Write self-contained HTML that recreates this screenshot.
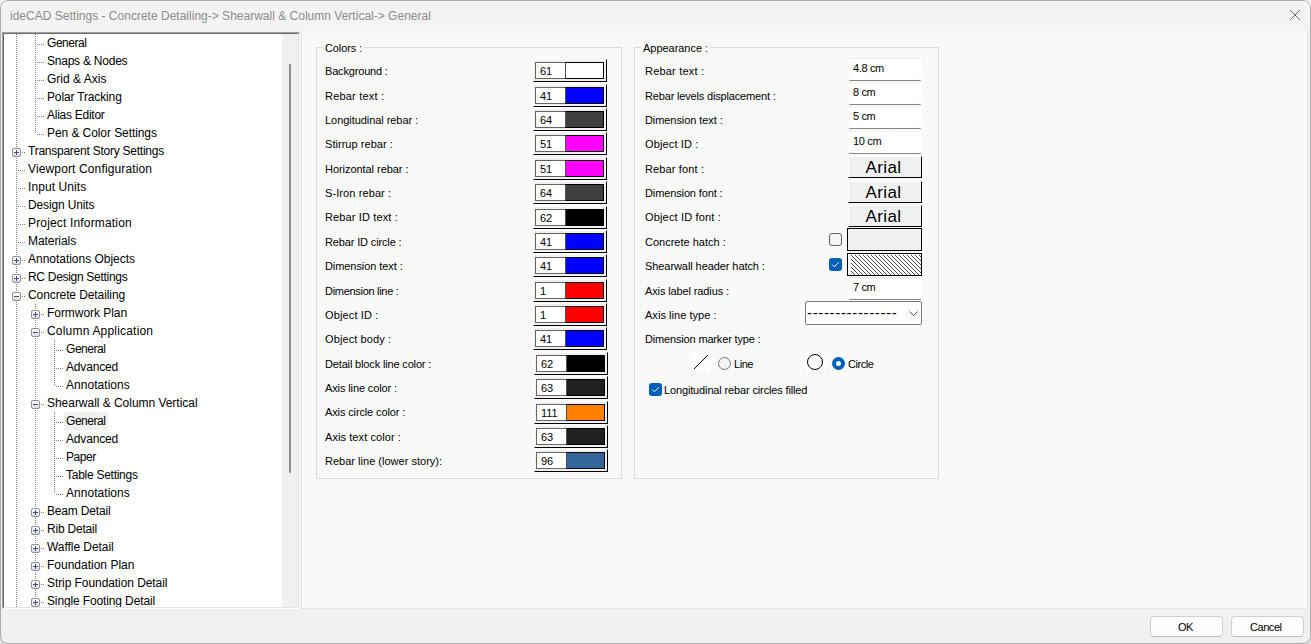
<!DOCTYPE html><html><head><meta charset="utf-8"><title>ideCAD Settings</title><style>
*{box-sizing:border-box;margin:0;padding:0}
html,body{width:1311px;height:644px;overflow:hidden;background:#f4f4f4}
body{font-family:"Liberation Sans",sans-serif;font-size:11px;color:#000;position:relative}
.win{position:absolute;left:0;top:0;width:1311px;height:644px;background:#f0f0f0;border:1px solid #adadad;border-radius:8px;overflow:hidden}
.abs,.win div,.win span,.win svg{position:absolute}
.tbar{left:0;top:0;width:1309px;height:30px;background:#f3f3f3}
.title{left:9px;top:6px;font-size:12px;line-height:18px;color:#8c8c8c;white-space:pre;letter-spacing:0px}
.tree{left:1px;top:31px;width:298px;height:577px;background:#fff;border:1px solid;border-color:#a0a0a0 #fff #fff #a0a0a0;overflow:hidden}
.treein{left:0;top:0;width:296px;height:575px;border:1px solid;border-color:#696969 #e3e3e3 #e3e3e3 #696969;overflow:hidden}
.sb{left:278px;top:0;width:16px;height:574px;background:#f0f0f0}
.thumb{left:7px;top:30px;width:2px;height:409px;background:#8b8b8b;border-radius:1px}
.ti{font-size:12px;line-height:18px;height:18px;white-space:pre;letter-spacing:-0.2px}
.sel{background:#efefef}
.vl{width:1px;background-image:repeating-linear-gradient(to bottom,#808080 0,#808080 1px,transparent 1px,transparent 2px)}
.hl{height:1px;background-image:repeating-linear-gradient(to right,#808080 0,#808080 1px,transparent 1px,transparent 2px)}
.bx{width:9px;height:9px;border:1px solid #919191;border-radius:2px;background:linear-gradient(#ffffff 0%,#f2f2f2 50%,#d9d9d9 100%)}
.bx i{position:absolute;background:#3a4a9a}
.bx .h{left:1px;top:3px;width:5px;height:1px}
.bx .v{left:3px;top:1px;width:1px;height:5px}
.panel{left:301px;top:30px;width:1005px;height:577px;background:#f9f9f9}
.grp{border:1px solid #dcdcdc}
.gl{background:#f9f9f9;white-space:pre;line-height:13px;height:13px;letter-spacing:-0.15px}
.lb{white-space:pre;line-height:13px;height:13px;letter-spacing:-0.15px}
.sw{width:74px;height:23px;background:#f0f0f0;border:1px solid;border-color:#fff #000 #000 #fff}
.sw .n{left:1px;top:2px;width:30px;height:17px;background:#fff;border:1px solid #646464;border-right:0}
.sw .n span{left:4px;top:2px;line-height:13px;letter-spacing:-0.1px}
.sw .c{left:31px;top:2px;width:39px;height:17px;border:1px solid #000;border-left-color:#505050}
.ed{width:74px;height:23px;background:#fff;border:1px solid #fefefe;border-top-color:#f0f0f0;border-bottom-color:#868686;border-radius:3px}
.ed span{left:4px;top:3px;line-height:13px;white-space:pre;letter-spacing:-0.35px}
.fb{width:74px;height:22px;padding-right:3px;background:#f0f0f0;border:1px solid;border-color:#fff #000 #000 #fff;font-size:17px;line-height:22px;text-align:center;letter-spacing:0.4px}
.hb{width:75px;height:23px;background:#f0f0f0;border:1px solid #000}
.cb{width:13px;height:13px;border-radius:3px}
.cb.off{border:1px solid #626262;background:#f6f6f6}
.cb.on{background:#005fb8}
.rb{width:13px;height:13px;border-radius:50%}
.rb.off{border:1px solid #767676;background:#f3f3f3}
.rb.on{background:#fff;border:4px solid #005fb8}
.ic{width:20px;height:20px;background:#fdfdfd}
.btn{width:73px;height:21px;background:#fdfdfd;border:1px solid #d0d0d0;border-bottom-color:#b9b9b9;border-radius:4px;font-size:11px;line-height:19px}
.btn span{white-space:pre}
</style></head><body><div style="position:absolute;left:0;top:634px;width:1311px;height:10px;background:#dcdcdc"></div><div class="win">
<div class="tbar"></div>
<span class="title" style="left:9px;top:6px;letter-spacing:0.009px">ideCAD Settings - Concrete Detailing-&gt; Shearwall &amp; Column Vertical-&gt; General</span>
<svg style="left:1288px;top:8px" width="12" height="12" viewBox="0 0 12 12"><path d="M1 1L11 11M11 1L1 11" stroke="#6a6a6a" stroke-width="1" fill="none"/></svg>
<div class="tree" style="left:1px;top:31px"><div class="treein">
<div class="vl" style="left:12px;top:0px;height:574px"></div>
<div class="vl" style="left:31px;top:0px;height:100px"></div>
<div class="vl" style="left:31px;top:270px;height:304px"></div>
<div class="vl" style="left:50px;top:306px;height:46px"></div>
<div class="vl" style="left:50px;top:378px;height:82px"></div>
<div class="hl" style="left:33px;top:10px;width:8px"></div>
<span class="ti" style="left:41px;top:0px;padding:0 2px 0 2px;letter-spacing:-0.450px">General</span>
<div class="hl" style="left:33px;top:28px;width:8px"></div>
<span class="ti" style="left:41px;top:18px;padding:0 2px 0 2px;letter-spacing:-0.235px">Snaps &amp; Nodes</span>
<div class="hl" style="left:33px;top:46px;width:8px"></div>
<span class="ti" style="left:41px;top:36px;padding:0 2px 0 2px;letter-spacing:0.010px">Grid &amp; Axis</span>
<div class="hl" style="left:33px;top:64px;width:8px"></div>
<span class="ti" style="left:41px;top:54px;padding:0 2px 0 2px;letter-spacing:-0.146px">Polar Tracking</span>
<div class="hl" style="left:33px;top:82px;width:8px"></div>
<span class="ti" style="left:41px;top:72px;padding:0 2px 0 2px;letter-spacing:-0.264px">Alias Editor</span>
<div class="hl" style="left:33px;top:100px;width:8px"></div>
<span class="ti" style="left:41px;top:90px;padding:0 2px 0 2px;letter-spacing:-0.075px">Pen &amp; Color Settings</span>
<div class="hl" style="left:18px;top:118px;width:4px"></div>
<div class="bx" style="left:8px;top:114px"><i class="h"></i><i class=v></i></div>
<span class="ti" style="left:22px;top:108px;padding:0 2px 0 2px;letter-spacing:-0.245px">Transparent Story Settings</span>
<div class="hl" style="left:14px;top:136px;width:8px"></div>
<span class="ti" style="left:22px;top:126px;padding:0 2px 0 2px;letter-spacing:0.133px">Viewport Configuration</span>
<div class="hl" style="left:14px;top:154px;width:8px"></div>
<span class="ti" style="left:22px;top:144px;padding:0 2px 0 2px;letter-spacing:0.080px">Input Units</span>
<div class="hl" style="left:14px;top:172px;width:8px"></div>
<span class="ti" style="left:22px;top:162px;padding:0 2px 0 2px;letter-spacing:-0.149px">Design Units</span>
<div class="hl" style="left:14px;top:190px;width:8px"></div>
<span class="ti" style="left:22px;top:180px;padding:0 2px 0 2px;letter-spacing:0.166px">Project Information</span>
<div class="hl" style="left:14px;top:208px;width:8px"></div>
<span class="ti" style="left:22px;top:198px;padding:0 2px 0 2px;letter-spacing:-0.060px">Materials</span>
<div class="hl" style="left:18px;top:226px;width:4px"></div>
<div class="bx" style="left:8px;top:222px"><i class="h"></i><i class=v></i></div>
<span class="ti" style="left:22px;top:216px;padding:0 2px 0 2px;letter-spacing:-0.021px">Annotations Objects</span>
<div class="hl" style="left:18px;top:244px;width:4px"></div>
<div class="bx" style="left:8px;top:240px"><i class="h"></i><i class=v></i></div>
<span class="ti" style="left:22px;top:234px;padding:0 2px 0 2px;letter-spacing:-0.299px">RC Design Settings</span>
<div class="hl" style="left:18px;top:262px;width:4px"></div>
<div class="bx" style="left:8px;top:258px"><i class="h"></i></div>
<span class="ti" style="left:22px;top:252px;padding:0 2px 0 2px;letter-spacing:-0.093px">Concrete Detailing</span>
<div class="hl" style="left:37px;top:280px;width:4px"></div>
<div class="bx" style="left:27px;top:276px"><i class="h"></i><i class=v></i></div>
<span class="ti" style="left:41px;top:270px;padding:0 2px 0 2px;letter-spacing:-0.048px">Formwork Plan</span>
<div class="hl" style="left:37px;top:298px;width:4px"></div>
<div class="bx" style="left:27px;top:294px"><i class="h"></i></div>
<span class="ti" style="left:41px;top:288px;padding:0 2px 0 2px;letter-spacing:0.195px">Column Application</span>
<div class="hl" style="left:52px;top:316px;width:8px"></div>
<span class="ti" style="left:60px;top:306px;padding:0 2px 0 2px;letter-spacing:-0.450px">General</span>
<div class="hl" style="left:52px;top:334px;width:8px"></div>
<span class="ti" style="left:60px;top:324px;padding:0 2px 0 2px;letter-spacing:-0.160px">Advanced</span>
<div class="hl" style="left:52px;top:352px;width:8px"></div>
<span class="ti" style="left:60px;top:342px;padding:0 2px 0 2px;letter-spacing:0.038px">Annotations</span>
<div class="hl" style="left:37px;top:370px;width:4px"></div>
<div class="bx" style="left:27px;top:366px"><i class="h"></i></div>
<span class="ti" style="left:41px;top:360px;padding:0 2px 0 2px;letter-spacing:-0.033px">Shearwall &amp; Column Vertical</span>
<div class="hl" style="left:52px;top:388px;width:8px"></div>
<span class="ti sel" style="left:60px;top:378px;padding:0 2px 0 2px;letter-spacing:-0.450px">General</span>
<div class="hl" style="left:52px;top:406px;width:8px"></div>
<span class="ti" style="left:60px;top:396px;padding:0 2px 0 2px;letter-spacing:-0.160px">Advanced</span>
<div class="hl" style="left:52px;top:424px;width:8px"></div>
<span class="ti" style="left:60px;top:414px;padding:0 2px 0 2px;letter-spacing:-0.450px">Paper</span>
<div class="hl" style="left:52px;top:442px;width:8px"></div>
<span class="ti" style="left:60px;top:432px;padding:0 2px 0 2px;letter-spacing:-0.265px">Table Settings</span>
<div class="hl" style="left:52px;top:460px;width:8px"></div>
<span class="ti" style="left:60px;top:450px;padding:0 2px 0 2px;letter-spacing:0.038px">Annotations</span>
<div class="hl" style="left:37px;top:478px;width:4px"></div>
<div class="bx" style="left:27px;top:474px"><i class="h"></i><i class=v></i></div>
<span class="ti" style="left:41px;top:468px;padding:0 2px 0 2px;letter-spacing:-0.172px">Beam Detail</span>
<div class="hl" style="left:37px;top:496px;width:4px"></div>
<div class="bx" style="left:27px;top:492px"><i class="h"></i><i class=v></i></div>
<span class="ti" style="left:41px;top:486px;padding:0 2px 0 2px;letter-spacing:-0.200px">Rib Detail</span>
<div class="hl" style="left:37px;top:514px;width:4px"></div>
<div class="bx" style="left:27px;top:510px"><i class="h"></i><i class=v></i></div>
<span class="ti" style="left:41px;top:504px;padding:0 2px 0 2px;letter-spacing:-0.048px">Waffle Detail</span>
<div class="hl" style="left:37px;top:532px;width:4px"></div>
<div class="bx" style="left:27px;top:528px"><i class="h"></i><i class=v></i></div>
<span class="ti" style="left:41px;top:522px;padding:0 2px 0 2px;letter-spacing:-0.000px">Foundation Plan</span>
<div class="hl" style="left:37px;top:550px;width:4px"></div>
<div class="bx" style="left:27px;top:546px"><i class="h"></i><i class=v></i></div>
<span class="ti" style="left:41px;top:540px;padding:0 2px 0 2px;letter-spacing:-0.073px">Strip Foundation Detail</span>
<div class="hl" style="left:37px;top:568px;width:4px"></div>
<div class="bx" style="left:27px;top:564px"><i class="h"></i><i class=v></i></div>
<span class="ti" style="left:41px;top:558px;padding:0 2px 0 2px;letter-spacing:-0.130px">Single Footing Detail</span>
<div class="sb" style="left:278px;top:0"><div class="thumb" style="top:30px;height:409px"></div></div>
</div></div>
<div class="panel" style="left:300px;top:30px;width:1007px;height:578px;border:1px solid #e7e7e7;border-top:0">
<div class="grp" style="left:14px;top:16px;width:306px;height:432px"></div>
<span class="gl" style="left:21px;top:11px;width:41px"></span><span class="gl" style="left:23px;top:11px;letter-spacing:-0.110px">Colors :</span>
<div class="grp" style="left:332px;top:16px;width:305px;height:432px"></div>
<span class="gl" style="left:339px;top:11px;width:69px"></span><span class="gl" style="left:341px;top:11px;letter-spacing:-0.035px">Appearance :</span>
<span class="lb" style="left:23px;top:34px;letter-spacing:-0.175px">Background :</span>
<div class="sw" style="left:231px;top:28px"><div class="n"><span>61</span></div><div class="c" style="background:#ffffff"></div></div>
<span class="lb" style="left:23px;top:59px;letter-spacing:0.206px">Rebar text :</span>
<div class="sw" style="left:231px;top:53px"><div class="n"><span>41</span></div><div class="c" style="background:#0000ff"></div></div>
<span class="lb" style="left:23px;top:83px;letter-spacing:-0.054px">Longitudinal rebar :</span>
<div class="sw" style="left:231px;top:77px"><div class="n"><span>64</span></div><div class="c" style="background:#404040"></div></div>
<span class="lb" style="left:23px;top:107px;letter-spacing:0.040px">Stirrup rebar :</span>
<div class="sw" style="left:231px;top:101px"><div class="n"><span>51</span></div><div class="c" style="background:#ff00ff"></div></div>
<span class="lb" style="left:23px;top:132px;letter-spacing:-0.051px">Horizontal rebar :</span>
<div class="sw" style="left:231px;top:126px"><div class="n"><span>51</span></div><div class="c" style="background:#ff00ff"></div></div>
<span class="lb" style="left:23px;top:156px;letter-spacing:0.098px">S-Iron rebar :</span>
<div class="sw" style="left:231px;top:150px"><div class="n"><span>64</span></div><div class="c" style="background:#404040"></div></div>
<span class="lb" style="left:23px;top:180px;letter-spacing:0.130px">Rebar ID text :</span>
<div class="sw" style="left:231px;top:175px"><div class="n"><span>62</span></div><div class="c" style="background:#000000"></div></div>
<span class="lb" style="left:23px;top:205px;letter-spacing:-0.141px">Rebar ID circle :</span>
<div class="sw" style="left:231px;top:199px"><div class="n"><span>41</span></div><div class="c" style="background:#0000ff"></div></div>
<span class="lb" style="left:23px;top:229px;letter-spacing:-0.075px">Dimension text :</span>
<div class="sw" style="left:231px;top:223px"><div class="n"><span>41</span></div><div class="c" style="background:#0000ff"></div></div>
<span class="lb" style="left:23px;top:254px;letter-spacing:-0.299px">Dimension line :</span>
<div class="sw" style="left:231px;top:248px"><div class="n"><span>1</span></div><div class="c" style="background:#ff0000"></div></div>
<span class="lb" style="left:23px;top:278px;letter-spacing:0.130px">Object ID :</span>
<div class="sw" style="left:231px;top:272px"><div class="n"><span>1</span></div><div class="c" style="background:#ff0000"></div></div>
<span class="lb" style="left:23px;top:302px;letter-spacing:0.107px">Object body :</span>
<div class="sw" style="left:231px;top:296px"><div class="n"><span>41</span></div><div class="c" style="background:#0000ff"></div></div>
<span class="lb" style="left:23px;top:327px;letter-spacing:-0.156px">Detail block line color :</span>
<div class="sw" style="left:232px;top:321px"><div class="n"><span>62</span></div><div class="c" style="background:#000000"></div></div>
<span class="lb" style="left:23px;top:351px;letter-spacing:-0.115px">Axis line color :</span>
<div class="sw" style="left:232px;top:345px"><div class="n"><span>63</span></div><div class="c" style="background:#202020"></div></div>
<span class="lb" style="left:23px;top:375px;letter-spacing:-0.127px">Axis circle color :</span>
<div class="sw" style="left:232px;top:370px"><div class="n"><span>111</span></div><div class="c" style="background:#ff7f00"></div></div>
<span class="lb" style="left:23px;top:400px;letter-spacing:0.078px">Axis text color :</span>
<div class="sw" style="left:232px;top:394px"><div class="n"><span>63</span></div><div class="c" style="background:#202020"></div></div>
<span class="lb" style="left:23px;top:424px;letter-spacing:0.013px">Rebar line (lower story):</span>
<div class="sw" style="left:232px;top:418px"><div class="n"><span>96</span></div><div class="c" style="background:#336699"></div></div>
<span class="lb" style="left:343px;top:34px;letter-spacing:0.206px">Rebar text :</span>
<span class="lb" style="left:343px;top:59px;letter-spacing:-0.166px">Rebar levels displacement :</span>
<span class="lb" style="left:343px;top:83px;letter-spacing:-0.075px">Dimension text :</span>
<span class="lb" style="left:343px;top:107px;letter-spacing:0.130px">Object ID :</span>
<span class="lb" style="left:343px;top:132px;letter-spacing:0.143px">Rebar font :</span>
<span class="lb" style="left:343px;top:156px;letter-spacing:-0.122px">Dimension font :</span>
<span class="lb" style="left:343px;top:180px;letter-spacing:0.167px">Object ID font :</span>
<span class="lb" style="left:343px;top:205px;letter-spacing:-0.001px">Concrete hatch :</span>
<span class="lb" style="left:343px;top:229px;letter-spacing:-0.077px">Shearwall header hatch :</span>
<span class="lb" style="left:343px;top:254px;letter-spacing:-0.119px">Axis label radius :</span>
<span class="lb" style="left:343px;top:278px;letter-spacing:0.037px">Axis line type :</span>
<span class="lb" style="left:343px;top:302px;letter-spacing:-0.163px">Dimension marker type :</span>
<div class="ed" style="left:546px;top:27px"><span>4.8 cm</span></div>
<div class="ed" style="left:546px;top:51px"><span>8 cm</span></div>
<div class="ed" style="left:546px;top:75px"><span>5 cm</span></div>
<div class="ed" style="left:546px;top:100px"><span>10 cm</span></div>
<div class="ed" style="left:546px;top:246px"><span>7 cm</span></div>
<div class="fb" style="left:546px;top:125px">Arial</div>
<div class="fb" style="left:546px;top:150px">Arial</div>
<div class="fb" style="left:546px;top:174px">Arial</div>
<div class="hb" style="left:545px;top:197px"></div>
<div class="hb" style="left:545px;top:222px"><svg style="left:0;top:0" width="73" height="21" viewBox="-3 -1 73 21" shape-rendering="crispEdges"><defs><pattern id="h" width="4" height="4" patternUnits="userSpaceOnUse" fill="#484848"><rect x="0" y="0" width="1" height="1"/><rect x="1" y="1" width="1" height="1"/><rect x="2" y="2" width="1" height="1"/><rect x="3" y="3" width="1" height="1"/></pattern></defs><rect x="-3" y="-1" width="73" height="21" fill="#fff"/><rect width="70" height="20" fill="url(#h)"/></svg></div>
<div class="cb off" style="left:527px;top:202px"></div>
<div class="cb on" style="left:527px;top:227px"><svg style="left:2px;top:2px" width="9" height="9" viewBox="0 0 9 9"><path d="M1.2 4.6L3.4 6.8L7.8 2.2" stroke="#fff" stroke-width="1" fill="none"/></svg></div>
<div class="cb on" style="left:347px;top:352px"><svg style="left:2px;top:2px" width="9" height="9" viewBox="0 0 9 9"><path d="M1.2 4.6L3.4 6.8L7.8 2.2" stroke="#fff" stroke-width="1" fill="none"/></svg></div>
<span class="lb" style="left:362px;top:353px;letter-spacing:-0.141px">Longitudinal rebar circles filled</span>
<div style="left:503px;top:270px;width:117px;height:24px;background:#fff;border:1px solid #7a7a7a;border-radius:2px"><span style="left:1px;top:2px;font-size:15px;line-height:18px;white-space:pre;letter-spacing:0.66px">----------------</span><svg style="left:103px;top:9px" width="10" height="6" viewBox="0 0 10 6"><path d="M0.5 0.5L4.5 4.5L8.5 0.5" stroke="#505050" stroke-width="1" fill="none"/></svg></div>
<div class="ic" style="left:389px;top:321px"><svg width="20" height="20" viewBox="0 0 20 20"><path d="M3 17L17 3" stroke="#000" stroke-width="1" fill="none"/></svg></div>
<div class="rb off" style="left:416px;top:326px"></div>
<span class="lb" style="left:432px;top:327px;letter-spacing:-0.450px">Line</span>
<div class="ic" style="left:503px;top:321px"><svg width="20" height="20" viewBox="0 0 20 20"><circle cx="10" cy="10" r="7.5" stroke="#000" stroke-width="1" fill="none"/></svg></div>
<div class="rb on" style="left:530px;top:326px"></div>
<span class="lb" style="left:546px;top:327px;letter-spacing:-0.450px">Circle</span>
</div>
<div class="btn" style="left:1149px;top:615px"><span style="left:27px;top:1px;letter-spacing:-0.450px">OK</span></div>
<div class="btn" style="left:1230px;top:615px"><span style="left:18px;top:1px;letter-spacing:-0.450px">Cancel</span></div>
</div></body></html>
